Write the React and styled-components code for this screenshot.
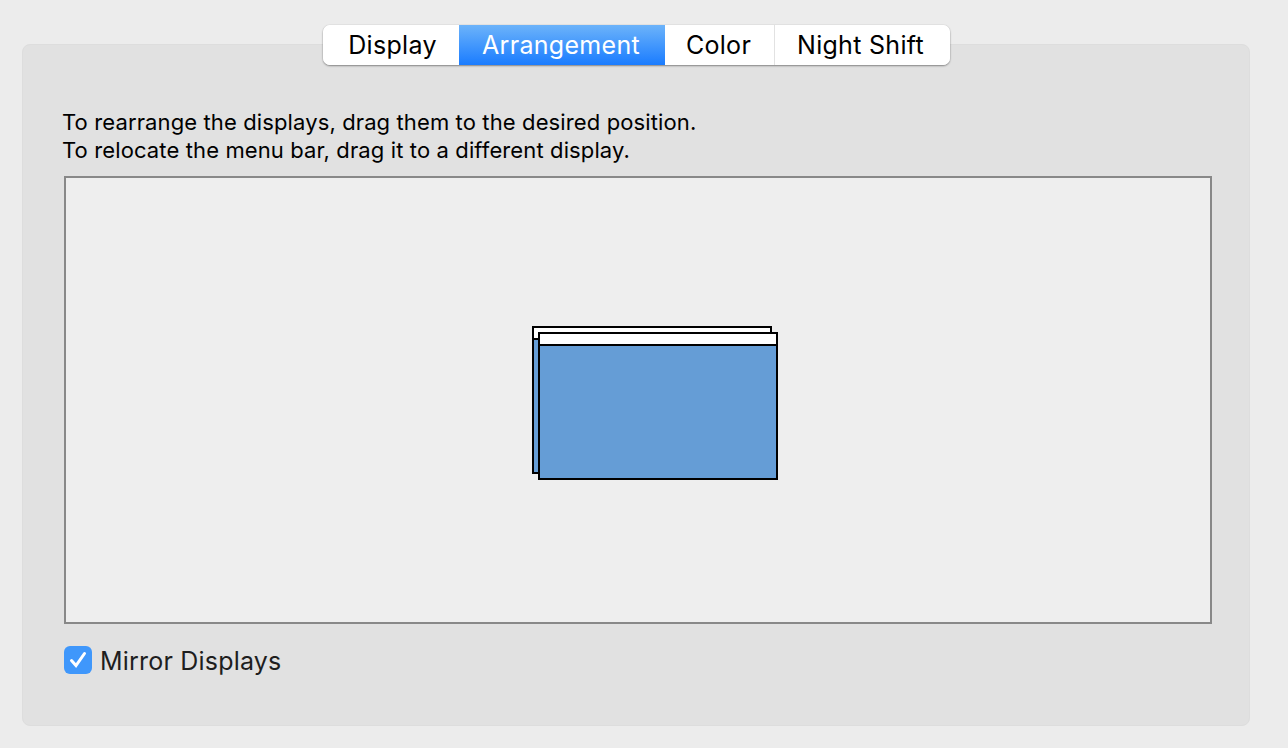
import React from 'react';
import styled, { createGlobalStyle } from 'styled-components';

const GlobalStyle = createGlobalStyle`
  html, body {
    margin: 0;
    padding: 0;
    background: #ececec;
  }
  body {
    font-family: 'Inter', 'Liberation Sans', sans-serif;
    -webkit-font-smoothing: antialiased;
  }
`;

const Page = styled.div`
  width: 1288px;
  height: 748px;
  box-sizing: border-box;
  padding: 44px 38px 22px 22px;
  background: #ececec;
  overflow: hidden;
`;

const Panel = styled.section`
  box-sizing: border-box;
  height: 682px;
  padding: 0 37px 0 41px;
  display: flex;
  flex-direction: column;
  background: #e1e1e1;
  border: 1px solid #dddddd;
  border-radius: 8px;
`;

const TabBar = styled.nav`
  align-self: center;
  display: flex;
  height: 40px;
  margin: -20px 0 0 -3px;
  background: #fff;
  border-radius: 7px;
  box-shadow: 0 1px 2px rgba(0, 0, 0, 0.4), 0 0 1px rgba(0, 0, 0, 0.25);
  overflow: hidden;
`;

const Tab = styled.button`
  width: ${p => p.$width}px;
  padding: 0 ${p => p.$padRight || 0}px 0 ${p => p.$padLeft || 0}px;
  border: 0;
  border-left: ${p => (p.$divider ? '1px solid #e2e2e2' : '0')};
  background: ${p => (p.$active ? 'linear-gradient(180deg, #6cb3fa 0%, #1a7cff 100%)' : '#fff')};
  color: ${p => (p.$active ? '#fff' : '#000')};
  font-family: inherit;
  font-size: 25px;
  letter-spacing: 0.3px;
  line-height: 40px;
`;

const Hint = styled.p`
  margin: 43px 0 12px -2px;
  color: #000;
  font-size: 22px;
  letter-spacing: 0.12px;
  line-height: 28px;
`;

const Arrangement = styled.div`
  position: relative;
  box-sizing: border-box;
  height: 448px;
  background: #eeeeee;
  border: 2px solid #888888;
`;

const Screen = styled.div`
  position: absolute;
  left: ${p => p.$left}px;
  top: ${p => p.$top}px;
  box-sizing: border-box;
  width: 240px;
  height: 148px;
  display: flex;
  flex-direction: column;
  background: #659dd6;
  border: 2px solid #000;
`;

const MenuBar = styled.div`
  box-sizing: border-box;
  height: 12px;
  background: #fff;
  border-bottom: 2px solid #000;
`;

const MirrorRow = styled.label`
  display: flex;
  align-items: flex-start;
  gap: 8px;
  margin-top: 22px;
  color: #1e1e1e;
  font-size: 25px;
  letter-spacing: 0.2px;
  line-height: 28px;
`;

const MirrorText = styled.span`
  padding-top: 1px;
`;

const CheckBox = styled.span`
  width: 28px;
  height: 28px;
  display: block;
  background: #3f97fb;
  border-radius: 6px;
`;

const tabs = [
  { label: 'Display', width: 136, padLeft: 3 },
  { label: 'Arrangement', width: 206, active: true, padRight: 2 },
  { label: 'Color', width: 109, padRight: 2 },
  { label: 'Night Shift', width: 176, divider: true, padRight: 4 },
];

export default function App() {
  return (
    <>
      <GlobalStyle />
      <Page>
        <Panel>
          <TabBar>
            {tabs.map(t => (
              <Tab
                key={t.label}
                $width={t.width}
                $active={t.active}
                $divider={t.divider}
                $padLeft={t.padLeft}
                $padRight={t.padRight}
              >
                {t.label}
              </Tab>
            ))}
          </TabBar>
          <Hint>
            To rearrange the displays, drag them to the desired position.
            <br />
            To relocate the menu bar, drag it to a different display.
          </Hint>
          <Arrangement>
            <Screen $left={466} $top={148}>
              <MenuBar />
            </Screen>
            <Screen $left={472} $top={154}>
              <MenuBar />
            </Screen>
          </Arrangement>
          <MirrorRow>
            <CheckBox>
              <svg width="28" height="28" viewBox="0 0 28 28" fill="none">
                <path d="M7.5 14.5 L12 19.5 L20.5 7.5" stroke="#fff" strokeWidth="3" strokeLinecap="round" />
              </svg>
            </CheckBox>
            <MirrorText>Mirror Displays</MirrorText>
          </MirrorRow>
        </Panel>
      </Page>
    </>
  );
}
